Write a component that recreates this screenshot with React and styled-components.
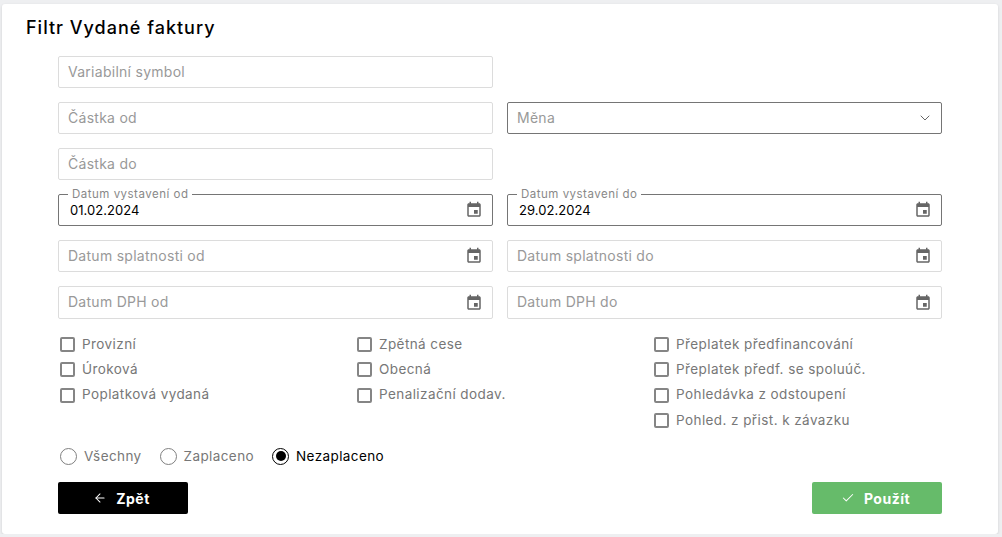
import { createGlobalStyle, styled } from 'styled-components';
import { ArrowLeft, Check, ChevronDown } from 'lucide-react';

const GlobalStyle = createGlobalStyle`
  html, body {
    margin: 0;
    background: #eeeff1;
    font-family: "Inter", "Noto Sans", sans-serif;
  }
  * { box-sizing: border-box; }
`;

const leftChecks = ['Provizní', 'Úroková', 'Poplatková vydaná'];
const middleChecks = ['Zpětná cese', 'Obecná', 'Penalizační dodav.'];
const rightChecks = [
  'Přeplatek předfinancování',
  'Přeplatek předf. se spoluúč.',
  'Pohledávka z odstoupení',
  'Pohled. z přist. k závazku',
];

function EventIcon() {
  return (
    <CalendarSvg viewBox="0 0 24 24">
      <path d="M17 12h-5v5h5v-5zM16 1v2H8V1H6v2H5c-1.11 0-1.99.9-1.99 2L3 19c0 1.1.89 2 2 2h14c1.1 0 2-.9 2-2V5c0-1.1-.9-2-2-2h-1V1h-2zm3 18H5V8h14v11z" />
    </CalendarSvg>
  );
}

function DateField({ placeholder, label, value, tall }) {
  return (
    <Field $active={!!value} $tall={tall}>
      {label && <FloatLabel>{label}</FloatLabel>}
      {value ? <Value>{value}</Value> : <Placeholder>{placeholder}</Placeholder>}
      <EventIcon />
    </Field>
  );
}

function CheckColumn({ items }) {
  return (
    <CheckCol>
      {items.map((item) => (
        <CheckRow key={item}>
          <CheckBox />
          <CheckText>{item}</CheckText>
        </CheckRow>
      ))}
    </CheckCol>
  );
}

export default function App() {
  return (
    <Card>
      <GlobalStyle />
      <Title>Filtr Vydané faktury</Title>
      <Form>
        <Fields>
          <Field><Placeholder>Variabilní symbol</Placeholder></Field>
          <span />
          <Field><Placeholder>Částka od</Placeholder></Field>
          <Field $active>
            <Placeholder>Měna</Placeholder>
            <Chevron size={16} strokeWidth={1.5} />
          </Field>
          <Field><Placeholder>Částka do</Placeholder></Field>
          <span />
          <DateField label="Datum vystavení od" value="01.02.2024" />
          <DateField label="Datum vystavení do" value="29.02.2024" />
          <DateField placeholder="Datum splatnosti od" />
          <DateField placeholder="Datum splatnosti do" />
          <DateField placeholder="Datum DPH od" tall />
          <DateField placeholder="Datum DPH do" tall />
        </Fields>
        <Checks>
          <CheckColumn items={leftChecks} />
          <CheckColumn items={middleChecks} />
          <CheckColumn items={rightChecks} />
        </Checks>
        <Radios>
          <RadioRow><Radio />Všechny</RadioRow>
          <RadioRow><Radio />Zaplaceno</RadioRow>
          <RadioRow $checked><Radio $checked />Nezaplaceno</RadioRow>
        </Radios>
        <Buttons>
          <Button $bg="#000000"><ArrowLeft size={14} strokeWidth={1.75} />Zpět</Button>
          <Button $bg="#66bb6a"><Check size={14} strokeWidth={1.75} />Použít</Button>
        </Buttons>
      </Form>
    </Card>
  );
}

const Card = styled.div`
  width: 996px;
  height: 530px;
  margin: 4px 0 0 2px;
  background: #ffffff;
  border-radius: 3px;
  padding-top: 14px;
  box-shadow: 0 1px 3px rgba(0, 0, 0, 0.12);
  overflow: hidden;
`;

const Title = styled.h1`
  margin: 0 0 0 24px;
  height: 20px;
  font-size: 18px;
  line-height: 20px;
  font-weight: 500;
  letter-spacing: 1px;
  color: #000000;
`;

const Form = styled.div`
  margin: 18px 56px 0;
  width: 884px;
`;

const Fields = styled.div`
  display: grid;
  grid-template-columns: 435px 435px;
  column-gap: 14px;
  row-gap: 14px;
`;

const Field = styled.div`
  position: relative;
  height: ${(p) => (p.$tall ? '33px' : '32px')};
  display: flex;
  align-items: center;
  justify-content: space-between;
  padding: 0 9px;
  border: 1px solid ${(p) => (p.$active ? '#757575' : '#dcdcdc')};
  border-radius: 2px;
  background: #ffffff;
  font-size: 14px;
`;

const Placeholder = styled.span`
  color: #999999;
  letter-spacing: 0.27px;
  padding-bottom: 2px;
`;

const Value = styled.span`
  color: #000000;
  padding-left: 2px;
  font-size: 13px;
  letter-spacing: 0.05px;
`;

const FloatLabel = styled.span`
  position: absolute;
  top: -8px;
  left: 9px;
  padding: 0 4px;
  background: #ffffff;
  font-size: 11.5px;
  line-height: 14px;
  letter-spacing: 0.5px;
  color: #888888;
`;

const Chevron = styled(ChevronDown)`
  color: #666666;
  margin-right: -1px;
`;

const CalendarSvg = styled.svg`
  width: 18px;
  height: 18px;
  fill: #666666;
  flex: none;
`;

const Checks = styled.div`
  display: grid;
  grid-template-columns: repeat(3, 297px);
  margin-top: 13px;
  padding-left: 2px;
  height: 101px;
`;

const CheckCol = styled.div`
  display: flex;
  flex-direction: column;
`;

const CheckRow = styled.label`
  display: flex;
  align-items: center;
  gap: 7px;
  height: 25.3px;
  font-size: 13.5px;
  color: #777777;
  letter-spacing: 0.42px;
`;

const CheckText = styled.span`
  padding-bottom: 2px;
`;

const CheckBox = styled.span`
  width: 15px;
  height: 15px;
  border: 2px solid #858585;
  border-radius: 2px;
  flex: none;
`;

const Radios = styled.div`
  display: flex;
  gap: 18px;
  margin-top: 12px;
  padding-left: 2px;
  height: 22px;
`;

const RadioRow = styled.label`
  display: flex;
  align-items: center;
  gap: 7px;
  font-size: 13.5px;
  letter-spacing: 0.4px;
  color: ${(p) => (p.$checked ? '#000000' : '#777777')};
`;

const Radio = styled.span`
  position: relative;
  width: 17px;
  height: 17px;
  border: 1.5px solid ${(p) => (p.$checked ? '#000000' : '#808080')};
  border-radius: 50%;
  flex: none;
  &::after {
    content: '';
    display: ${(p) => (p.$checked ? 'block' : 'none')};
    position: absolute;
    inset: 2.5px;
    border-radius: 50%;
    background: #000000;
  }
`;

const Buttons = styled.div`
  display: flex;
  justify-content: space-between;
  margin-top: 15px;
`;

const Button = styled.button`
  display: flex;
  align-items: center;
  justify-content: center;
  gap: 9px;
  width: 130px;
  height: 32px;
  padding: 0 3px 0 0;
  border: none;
  border-radius: 2px;
  background: ${(p) => p.$bg};
  color: #ffffff;
  font-family: inherit;
  font-size: 14px;
  font-weight: 700;
  letter-spacing: 0.5px;
`;
